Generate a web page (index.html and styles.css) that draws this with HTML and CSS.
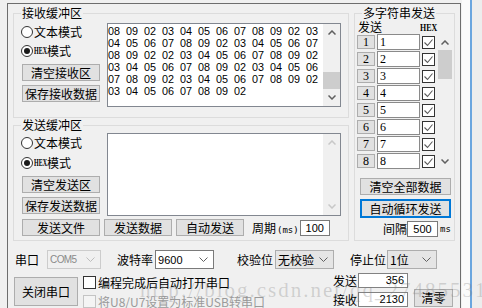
FILE: index.html
```html
<!DOCTYPE html>
<html lang="zh-CN">
  <head>
    <meta charset="UTF-8" />
    <title>串口调试助手</title>
    <link rel="stylesheet" href="styles.css">
  </head>
  <body>
    <div class="window">
      <div class="top">
        <div class="buffers">
          <div class="group recv">
            <span class="group-title">接收缓冲区</span>
            <div class="modes">
              <label class="radio"><i class="dot"></i>文本模式</label>
              <label class="radio checked"><i class="dot"></i><span class="hex">HEX</span>模式</label>
              <button class="btn wide">清空接收区</button>
              <button class="btn wide">保存接收数据</button>
            </div>
            <div class="textbox rx">
              <div class="hexdump">08 09 02 03 04 05 06 07 08 09 02 03
04 05 06 07 08 09 02 03 04 05 06 07
08 09 02 02 03 04 05 06 07 08 09 02
03 04 05 06 07 08 09 02 03 04 05 06
07 08 09 02 03 04 05 06 07 08 09 02
03 04 05 06 07 08 09 02</div>
              <div class="vscroll">
                <span class="arrow"><svg width="8" height="5" viewBox="0 0 8 5"><polyline points="0.5,4.5 4,1 7.5,4.5"/></svg></span>
                <span class="track end"><span class="thumb"></span></span>
                <span class="arrow"><svg width="8" height="5" viewBox="0 0 8 5"><polyline points="0.5,0.5 4,4 7.5,0.5"/></svg></span>
              </div>
            </div>
          </div>

          <div class="group send">
            <span class="group-title">发送缓冲区</span>
            <div class="send-top">
              <div class="modes">
                <label class="radio"><i class="dot"></i>文本模式</label>
                <label class="radio checked"><i class="dot"></i><span class="hex">HEX</span>模式</label>
                <button class="btn wide">清空发送区</button>
                <button class="btn wide">保存发送数据</button>
              </div>
              <div class="textbox tx">
                <div class="hexdump"></div>
                <div class="vscroll off">
                  <span class="arrow"><svg width="8" height="5" viewBox="0 0 8 5"><polyline points="0.5,4.5 4,1 7.5,4.5"/></svg></span>
                  <span class="track"></span>
                  <span class="arrow"><svg width="8" height="5" viewBox="0 0 8 5"><polyline points="0.5,0.5 4,4 7.5,0.5"/></svg></span>
                </div>
              </div>
            </div>
            <div class="send-actions">
              <button class="btn wide">发送文件</button>
              <button class="btn mid">发送数据</button>
              <button class="btn mid">自动发送</button>
              <span class="period">周期<span class="ms">(ms)</span></span>
              <input class="field num center period-val" value="100">
            </div>
          </div>
        </div>

        <div class="group multi">
          <span class="group-title">多字符串发送</span>
          <div class="multi-head">
            <span>发送</span>
            <span class="hex big">HEX</span>
          </div>
          <div class="multi-body">
            <div class="mrows">
              <div class="mrow"><button class="nbtn">1</button><input class="field mtext" value="1"><span class="chk"><svg width="11" height="11" viewBox="0 0 11 11"><polyline points="1.5,5.5 4.5,8.5 9.5,2.5"/></svg></span></div>
              <div class="mrow"><button class="nbtn">2</button><input class="field mtext" value="2"><span class="chk"><svg width="11" height="11" viewBox="0 0 11 11"><polyline points="1.5,5.5 4.5,8.5 9.5,2.5"/></svg></span></div>
              <div class="mrow"><button class="nbtn">3</button><input class="field mtext" value="3"><span class="chk"><svg width="11" height="11" viewBox="0 0 11 11"><polyline points="1.5,5.5 4.5,8.5 9.5,2.5"/></svg></span></div>
              <div class="mrow"><button class="nbtn">4</button><input class="field mtext" value="4"><span class="chk"><svg width="11" height="11" viewBox="0 0 11 11"><polyline points="1.5,5.5 4.5,8.5 9.5,2.5"/></svg></span></div>
              <div class="mrow"><button class="nbtn">5</button><input class="field mtext" value="5"><span class="chk"><svg width="11" height="11" viewBox="0 0 11 11"><polyline points="1.5,5.5 4.5,8.5 9.5,2.5"/></svg></span></div>
              <div class="mrow"><button class="nbtn">6</button><input class="field mtext" value="6"><span class="chk"><svg width="11" height="11" viewBox="0 0 11 11"><polyline points="1.5,5.5 4.5,8.5 9.5,2.5"/></svg></span></div>
              <div class="mrow"><button class="nbtn">7</button><input class="field mtext" value="7"><span class="chk"><svg width="11" height="11" viewBox="0 0 11 11"><polyline points="1.5,5.5 4.5,8.5 9.5,2.5"/></svg></span></div>
              <div class="mrow"><button class="nbtn">8</button><input class="field mtext" value="8"><span class="chk"><svg width="11" height="11" viewBox="0 0 11 11"><polyline points="1.5,5.5 4.5,8.5 9.5,2.5"/></svg></span></div>
            </div>
            <div class="vscroll mini">
              <span class="arrow"><svg width="8" height="5" viewBox="0 0 8 5"><polyline points="0.5,4.5 4,1 7.5,4.5"/></svg></span>
              <span class="track"><span class="thumb"></span></span>
              <span class="arrow"><svg width="8" height="5" viewBox="0 0 8 5"><polyline points="0.5,0.5 4,4 7.5,0.5"/></svg></span>
            </div>
          </div>
          <button class="btn side-btn clear-all">清空全部数据</button>
          <button class="btn side-btn auto-loop">自动循环发送</button>
          <div class="interval">
            <span>间隔</span>
            <input class="field num center interval-val" value="500">
            <span class="ms">ms</span>
          </div>
        </div>
      </div>

      <div class="ports">
        <span>串口</span>
        <span class="combo disabled com"><span class="combo-text latin">COM5</span><svg width="9" height="5" viewBox="0 0 9 5"><polyline points="0.5,0.5 4.5,4.5 8.5,0.5"/></svg></span>
        <span class="lbl baud-lbl">波特率</span>
        <span class="combo edit baud"><span class="combo-text latin">9600</span><svg width="9" height="5" viewBox="0 0 9 5"><polyline points="0.5,0.5 4.5,4.5 8.5,0.5"/></svg></span>
        <span class="lbl parity-lbl">校验位</span>
        <span class="combo parity"><span class="combo-text">无校验</span><svg width="9" height="5" viewBox="0 0 9 5"><polyline points="0.5,0.5 4.5,4.5 8.5,0.5"/></svg></span>
        <span class="lbl stop-lbl">停止位</span>
        <span class="combo stop"><span class="combo-text">1位</span><svg width="9" height="5" viewBox="0 0 9 5"><polyline points="0.5,0.5 4.5,4.5 8.5,0.5"/></svg></span>
      </div>

      <div class="row2">
        <button class="btn close-port">关闭串口</button>
        <div class="checks">
          <label class="check-line"><span class="chk empty"></span>编程完成后自动打开串口</label>
          <label class="check-line disabled"><span class="chk empty"></span>将U8/U7设置为标准USB转串口</label>
        </div>
        <div class="counters">
          <div class="counter"><span>发送</span><span class="field num right">356</span></div>
          <div class="counter"><span>接收</span><span class="field num right">2130</span></div>
        </div>
        <button class="btn reset">清零</button>
      </div>
    </div>
    <div class="side"></div>

    <div class="watermark">http://blog.csdn.net/qq_27485531</div>
  </body>
</html>
```

FILE: styles.css
```css
* {
  box-sizing: border-box;
}

body {
  margin: 0;
  width: 482px;
  height: 308px;
  overflow: hidden;
  display: flex;
  position: relative;
  background-color: #f0f0f0;
  font-family: "Noto Sans CJK SC", sans-serif;
  font-size: 12px;
  line-height: 14px;
  color: #000;
}

.window {
  width: 454px;
  height: 310px;
  margin: 3px 0 0 7px;
  border: 1px solid #6d6d6d;
  border-bottom: 0;
}

.side {
  flex: 1;
  margin-left: 1px;
  background: linear-gradient(to right, #fafafa 0 8px, #6aa6df 8px 10px, #ededed 10px);
}

/* group boxes */
.top {
  display: flex;
  padding: 9px 0 0 5px;
}

.group {
  position: relative;
  border: 1px solid #dcdcdc;
}

.group-title {
  position: absolute;
  top: -8px;
  left: 7px;
  padding: 0 1px;
  background-color: #f0f0f0;
  line-height: 14px;
}

.buffers {
  width: 336px;
}

.recv {
  height: 105px;
  display: flex;
  align-items: flex-start;
  padding: 9px 7px 0 8px;
}

.send {
  height: 116px;
  margin-top: 7px;
  padding: 7px 7px 0 8px;
}

.send-top {
  display: flex;
  align-items: flex-start;
}

.modes {
  width: 78px;
  margin: 1px 7px 0 0;
  display: flex;
  flex-direction: column;
}

.send .modes {
  margin-top: 2px;
}

.radio {
  height: 15px;
  display: flex;
  align-items: center;
  margin-bottom: 4px;
}

.send .radio {
  margin-bottom: 5px;
}

.radio + .radio {
  margin-bottom: 6px;
}

.dot {
  width: 12px;
  height: 12px;
  margin: 0 1px 0 -1px;
  border: 1px solid #333;
  border-radius: 50%;
  background-color: #fff;
  display: flex;
  align-items: center;
  justify-content: center;
}

.checked .dot::after {
  content: "";
  width: 6px;
  height: 6px;
  border-radius: 50%;
  background-color: #1a1a1a;
}

.hex {
  display: inline-block;
  width: 13px;
  font: bold 10px/14px "Liberation Serif", serif;
  transform: scaleX(0.6);
  transform-origin: 0 50%;
  white-space: nowrap;
}

.hex.big {
  width: 17px;
  font-size: 11px;
  transform: scaleX(0.72);
}

/* buttons */
.btn {
  height: 17px;
  padding: 0;
  border: 1px solid #adadad;
  background-color: #e1e1e1;
  font: inherit;
  line-height: 15px;
  color: #000;
  text-align: center;
}

.wide {
  width: 78px;
}

.modes .btn + .btn {
  margin-top: 4px;
}

.mid {
  width: 68px;
  margin-left: 4px;
}

/* text areas */
.textbox {
  display: flex;
  border: 1px solid #828790;
  background-color: #fff;
}

.rx {
  width: 234px;
  height: 84px;
}

.tx {
  width: 234px;
  height: 83px;
}

.hexdump {
  flex: 1;
  padding: 1px 0 0 0;
  font-family: "Liberation Sans", sans-serif;
  font-size: 10.8px;
  line-height: 12px;
  word-spacing: 3px;
  white-space: pre-line;
}

.vscroll {
  width: 17px;
  display: flex;
  flex-direction: column;
  background-color: #f0f0f0;
}

.vscroll .arrow {
  height: 17px;
  display: flex;
  align-items: center;
  justify-content: center;
}

.vscroll svg polyline {
  fill: none;
  stroke: #606060;
  stroke-width: 1.5;
}

.vscroll.off svg polyline {
  stroke: #c8c8c8;
}

.track {
  flex: 1;
  display: flex;
  flex-direction: column;
}

.track.end {
  justify-content: flex-end;
}

.thumb {
  height: 17px;
  background-color: #cdcdcd;
}

.send-actions {
  display: flex;
  align-items: flex-start;
  height: 17px;
  margin-top: 3px;
}

.period {
  margin-left: 8px;
  line-height: 17px;
}

.ms {
  font-family: "DejaVu Sans Mono", monospace;
  font-size: 9px;
  margin-left: 1px;
}

.field {
  display: block;
  height: 16px;
  padding: 0 2px;
  border: 1px solid #7a7a7a;
  background-color: #fff;
  font-family: "Liberation Sans", sans-serif;
  font-size: 11px;
  line-height: 14px;
  color: #000;
  outline: none;
}

.center {
  text-align: center;
}

.right {
  text-align: right;
  padding-right: 3px;
}

.period-val {
  width: 30px;
  margin-top: 1px;
  margin-left: 1px;
}

/* multi string send */
.multi {
  width: 101px;
  height: 228px;
  margin-left: 5px;
  padding-left: 2px;
}

.multi-head {
  display: flex;
  height: 20px;
  padding: 6px 0 0 1px;
}

.multi-head .hex {
  margin-left: 38px;
  line-height: 15px;
}

.multi-body {
  display: flex;
}

.mrows {
  width: 78px;
  display: flex;
  flex-direction: column;
  gap: 1px;
}

.mrow {
  height: 16px;
  display: flex;
  align-items: center;
}

.nbtn {
  width: 18px;
  height: 14px;
  padding: 0;
  border: 1px solid #adadad;
  background-color: #e1e1e1;
  font: 12px/12px "Liberation Serif", serif;
  color: #000;
}

.mtext {
  width: 43px;
  margin-left: 2px;
  font-family: "Liberation Serif", serif;
  font-size: 12px;
  border-color: #8a8a8a;
}

.chk {
  width: 13px;
  height: 13px;
  margin-left: 2px;
  border: 1px solid #333;
  background-color: #fff;
  display: flex;
}

.chk svg polyline {
  fill: none;
  stroke: #5a5a5a;
  stroke-width: 1.1;
}

.vscroll.mini {
  width: 14px;
  height: 135px;
  margin-left: 3px;
}

.vscroll.mini .arrow {
  height: 16px;
}

.vscroll.mini .thumb {
  height: 29px;
}

.side-btn {
  width: 91px;
  margin-left: 3px;
}

.clear-all {
  margin-top: 9px;
}

.auto-loop {
  height: 19px;
  margin-top: 4px;
  border: 2px solid #0078d7;
  line-height: 15px;
}

.interval {
  display: flex;
  align-items: center;
  height: 16px;
  margin-top: 3px;
  padding-left: 26px;
}

.interval-val {
  width: 31px;
  margin-left: 0;
}

.interval .ms {
  margin-left: 2px;
}

/* port settings */
.ports {
  display: flex;
  align-items: center;
  height: 19px;
  margin-top: 9px;
  padding-left: 7px;
}

.combo {
  height: 19px;
  display: flex;
  align-items: center;
  justify-content: space-between;
  padding: 0 5px 0 2px;
  border: 1px solid #adadad;
  background-color: #e5e5e5;
}

.combo svg polyline {
  fill: none;
  stroke: #606060;
  stroke-width: 1;
}

.latin {
  font-family: "Liberation Sans", sans-serif;
  font-size: 11px;
}

.com {
  width: 54px;
  margin-left: 8px;
  border-color: #cccccc;
  background-color: #f0f0f0;
  color: #8a8a8a;
}

.com .latin {
  font-size: 10px;
  letter-spacing: -0.6px;
}

.com svg polyline {
  stroke: #bdbdbd;
}

.baud-lbl {
  margin-left: 16px;
}

.baud {
  width: 59px;
  margin-left: 2px;
  border-color: #7a7a7a;
  background-color: #fff;
}

.parity-lbl {
  margin-left: 23px;
}

.parity {
  width: 59px;
  margin-left: 2px;
}

.stop-lbl {
  margin-left: 16px;
}

.stop {
  width: 50px;
  margin-left: 1px;
}

.row2 {
  display: flex;
  align-items: flex-start;
  margin-top: 4px;
}

.close-port {
  width: 64px;
  height: 29px;
  margin: 4px 0 0 6px;
  line-height: 27px;
}

.checks {
  width: 250px;
  margin-left: 5px;
}

.check-line {
  height: 19px;
  display: flex;
  align-items: center;
}

.check-line .chk {
  margin: 0 2px 0 0;
}

.check-line.disabled {
  color: #9a9a9a;
}

.check-line.disabled .chk {
  border-color: #c4c4c4;
  background-color: #f4f4f4;
}

.counters {
  display: flex;
  flex-direction: column;
  gap: 4px;
}

.counter {
  display: flex;
  align-items: center;
  height: 15px;
}

.counter .field {
  width: 50px;
  height: 15px;
  margin-left: 1px;
  line-height: 13px;
  border-color: #828282;
}

.reset {
  width: 39px;
  height: 18px;
  margin: 16px 0 0 6px;
  line-height: 16px;
}

.watermark {
  position: absolute;
  left: 140px;
  top: 278px;
  font-family: "Liberation Serif", serif;
  font-size: 21px;
  line-height: 24px;
  letter-spacing: 2px;
  color: rgba(120, 120, 120, 0.28);
  white-space: nowrap;
  pointer-events: none;
}
```
